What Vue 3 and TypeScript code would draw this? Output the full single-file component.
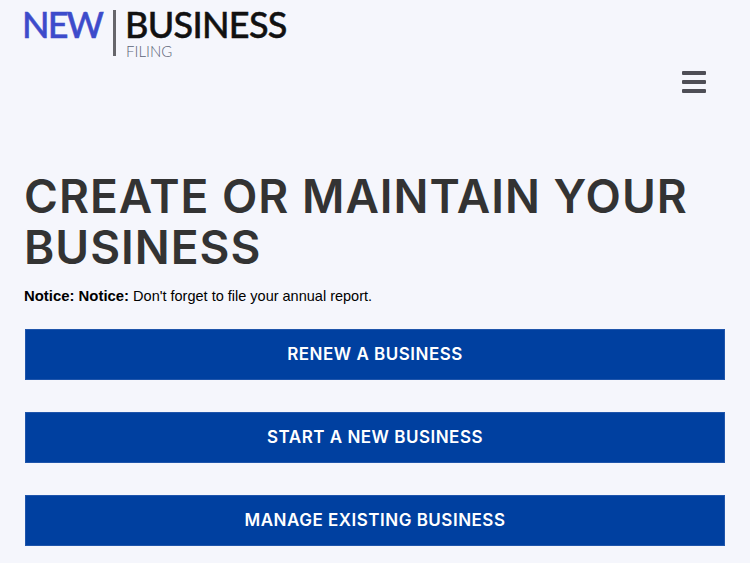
<script setup lang="ts">
const actions = ['RENEW A BUSINESS', 'START A NEW BUSINESS', 'MANAGE EXISTING BUSINESS']
</script>

<template>
  <div class="page">
    <header class="site-header">
      <div class="logo">
        <span class="logo-new">NEW</span>
        <span class="logo-bar"></span>
        <div class="logo-right">
          <span class="logo-business">BUSINESS</span>
          <span class="logo-filing">FILING</span>
        </div>
      </div>
      <button class="menu-btn" aria-label="Menu">
        <span></span>
        <span></span>
        <span></span>
      </button>
    </header>

    <main class="main">
      <h1 class="title">CREATE OR MAINTAIN YOUR BUSINESS</h1>
      <p class="notice"><strong>Notice: Notice:</strong> Don't forget to file your annual report.</p>
      <div class="actions">
        <a v-for="action in actions" :key="action" class="action-btn" href="#">{{ action }}</a>
      </div>
    </main>
  </div>
</template>

<style>
html,
body {
  margin: 0;
  background: #f5f6fc;
}
</style>

<style scoped>
.page {
  height: 563px;
  overflow: hidden;
  background: #f5f6fc;
  box-sizing: border-box;
  padding: 0 25px 0 24px;
}

.site-header {
  height: 171px;
  display: flex;
  justify-content: space-between;
  align-items: flex-start;
}

.logo {
  display: flex;
  align-items: flex-start;
  padding-top: 8px;
  margin-left: -2px;
  font-family: Lato, sans-serif;
}

.logo-new {
  font-size: 36px;
  line-height: 32px;
  font-weight: 500;
  -webkit-text-stroke: 0.5px #3d4bcb;
  color: #3d4bcb;
  letter-spacing: -1.9px;
}

.logo-bar {
  width: 3px;
  height: 46px;
  margin: 2px 9px 0 11px;
  background: #66666b;
}

.logo-right {
  display: flex;
  flex-direction: column;
}

.logo-business {
  font-size: 36px;
  line-height: 32px;
  font-weight: 500;
  -webkit-text-stroke: 0.5px #111;
  color: #111;
  letter-spacing: -0.7px;
}

.logo-filing {
  font-size: 15px;
  line-height: 14px;
  margin: 4px 0 0 1px;
  font-weight: 300;
  color: #5b6478;
}

.menu-btn {
  margin-top: 71px;
  margin-right: 19px;
  width: 24px;
  padding: 0;
  border: none;
  background: none;
  display: flex;
  flex-direction: column;
  gap: 5px;
}

.menu-btn span {
  display: block;
  height: 4px;
  border-radius: 1px;
  background: #4e4e56;
}

.title {
  margin: 0;
  font-family: Inter, sans-serif;
  font-size: 46px;
  line-height: 51px;
  font-weight: 600;
  letter-spacing: 1px;
  color: #333;
}

.notice {
  margin: 11px 0 0;
  font-family: "Liberation Sans", Arial, sans-serif;
  font-size: 14.5px;
  line-height: 24px;
  color: #000;
}

.notice strong {
  font-size: 14.9px;
}

.actions {
  margin-top: 21px;
  margin-left: 1px;
  display: flex;
  flex-direction: column;
  gap: 32px;
}

.action-btn {
  height: 51px;
  padding-bottom: 2px;
  box-sizing: border-box;
  display: flex;
  align-items: center;
  justify-content: center;
  background: #0040a0;
  border: 1px solid #1f55ab;
  color: #fff;
  font-family: Inter, sans-serif;
  font-size: 17px;
  font-weight: 600;
  letter-spacing: 0.5px;
  text-decoration: none;
}
</style>
